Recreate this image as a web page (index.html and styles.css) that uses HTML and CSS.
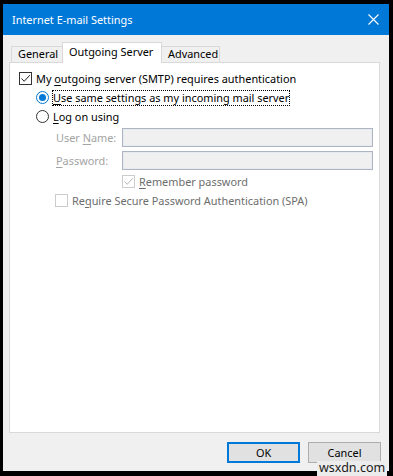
FILE: index.html
```html
<!DOCTYPE html>
<html lang="en">
<head>
  <meta charset="UTF-8" />
  <title>Internet E-mail Settings</title>
  <link rel="stylesheet" href="styles.css">
</head>
<body>
  <div class="window">
    <div class="titlebar">
      <span class="title">Internet E-mail Settings</span>
      <svg class="close" width="11" height="11" viewBox="0 0 11 11">
        <path d="M0.5 0.5 L10.5 10.5 M10.5 0.5 L0.5 10.5" stroke="#fff" stroke-width="1.1" fill="none"/>
      </svg>
    </div>

    <div class="content">
      <div class="tabs">
        <div class="tab tab-general">General</div>
        <div class="tab active tab-outgoing">Outgoing Server</div>
        <div class="tab tab-advanced">Advanced</div>
      </div>

      <div class="panel">
        <div class="row">
          <span class="check">
            <svg width="11" height="11" viewBox="0 0 11 11"><path d="M1.5 5.5 L4.2 8.3 L9.8 2.2" stroke="#222" stroke-width="1" fill="none"/></svg>
          </span>
          <span class="label">My <u>o</u>utgoing server (SMTP) requires authentication</span>
        </div>

        <div class="row indent">
          <span class="radio on"><span class="dot"></span></span>
          <span class="label focus"><u>U</u>se same settings as my incoming mail server</span>
        </div>

        <div class="row indent">
          <span class="radio"></span>
          <span class="label"><u>L</u>og on using</span>
        </div>

        <div class="field first">
          <span class="field-label">User <u>N</u>ame:</span>
          <span class="input"></span>
        </div>
        <div class="field">
          <span class="field-label"><u>P</u>assword:</span>
          <span class="input"></span>
        </div>

        <div class="row remember">
          <span class="check disabled">
            <svg width="11" height="11" viewBox="0 0 11 11"><path d="M1.5 5.5 L4.2 8.3 L9.8 2.2" stroke="#b5b5b5" stroke-width="1" fill="none"/></svg>
          </span>
          <span class="label muted"><u>R</u>emember password</span>
        </div>

        <div class="row spa">
          <span class="check disabled"></span>
          <span class="label muted">Re<u>q</u>uire Secure Password Authentication (SPA)</span>
        </div>
      </div>

      <div class="buttons">
        <button class="btn default">OK</button>
        <button class="btn">Cancel</button>
      </div>
    </div>
  </div>
  <div class="watermark">wsxdn.com</div>
</body>
</html>
```
FILE: styles.css
```css
body {
  margin: 0;
  background: #000;
  font-family: "Noto Sans", sans-serif;
  font-size: 10.9px;
  color: #000;
}

.window {
  width: 386px;
  height: 467px;
  margin: 4px 0 0 3px;
  display: flex;
  flex-direction: column;
  background: #f0f0f0;
}

.titlebar {
  height: 31px;
  background: #0078d7;
  color: #fff;
  display: flex;
  align-items: center;
  justify-content: space-between;
  padding: 0 10px 0 9px;
  flex-shrink: 0;
}
.title {
  font-size: 10.9px;
  margin-top: -1px;
}
.close {
  display: block;
  margin-top: -1px;
}

.content {
  flex: 1;
  display: flex;
  flex-direction: column;
  padding: 7px 9px 8px 6px;
}

/* tabs */
.tabs {
  display: flex;
  align-items: flex-end;
  height: 21px;
  margin: 0 0 -1px 2px;
  position: relative;
  z-index: 1;
}
.tab {
  height: 15px;
  line-height: 14px;
  border: 1px solid #d9d9d9;
  border-bottom: none;
  background: #f0f0f0;
  margin-bottom: 1px;
  padding: 0 6px 0 6px;
  box-sizing: content-box;
}
.tab-general {
  width: 38px;
  border-right: none;
}
.tab-outgoing {
  width: 86px;
}
.tab-advanced {
  width: 45px;
  border-left: none;
}
.tab.active {
  height: 20px;
  line-height: 17px;
  background: #fff;
  margin-bottom: 0;
}

.panel {
  flex: 1;
  background: #fff;
  border: 1px solid #d9d9d9;
  padding: 6px 6px 0 9px;
}

.row {
  display: flex;
  align-items: center;
  height: 19px;
}
.row.indent {
  padding-left: 17px;
}
.label {
  margin-left: 4px;
  white-space: nowrap;
}
.label.focus {
  outline: 1px dotted #000;
  outline-offset: 0;
  padding: 0 0 1px 0;
  line-height: 13px;
}
.label.muted {
  color: #6d6d6d;
}
u {
  text-underline-offset: 2px;
}

.check {
  width: 11px;
  height: 11px;
  border: 1px solid #333;
  background: #fff;
  display: flex;
  flex-shrink: 0;
}
.check.disabled {
  border-color: #cccccc;
}

.radio {
  width: 11px;
  height: 11px;
  border: 1px solid #333;
  border-radius: 50%;
  background: #fff;
  display: flex;
  align-items: center;
  justify-content: center;
  flex-shrink: 0;
}
.radio.on {
  border-color: #0078d7;
}
.radio .dot {
  width: 7px;
  height: 7px;
  border-radius: 50%;
  background: #0078d7;
}

/* user name / password */
.field {
  display: flex;
  align-items: center;
  height: 19px;
  margin-top: 4px;
  padding-left: 37px;
}
.field.first {
  margin-top: 2px;
}
.field-label {
  width: 66px;
  color: #a3a3a3;
  white-space: nowrap;
}
.input {
  flex: 1;
  height: 17px;
  background: #f0f0f0;
  border: 1px solid #aeb5c0;
  box-shadow: inset 0 0 0 1px #e6ebf2;
}

.row.remember {
  margin-top: 2px;
  padding-left: 103px;
}
.row.spa {
  padding-left: 36px;
}

/* dialog buttons */
.buttons {
  display: flex;
  justify-content: flex-end;
  gap: 8px;
  margin: 9px -1px 0 0;
  height: 21px;
}
.btn {
  width: 73px;
  height: 21px;
  padding: 0;
  background: #e1e1e1;
  border: 1px solid #adadad;
  font-family: "Noto Sans", sans-serif;
  font-size: 10.9px;
  color: #000;
}
.btn.default {
  border: 2px solid #0078d7;
}

.watermark {
  position: absolute;
  left: 317px;
  top: 461px;
  height: 15px;
  padding: 0 2px;
  background: #ececec;
  font-family: "Noto Sans", sans-serif;
  font-size: 12.5px;
  line-height: 14px;
  color: #1a1a1a;
}
```
